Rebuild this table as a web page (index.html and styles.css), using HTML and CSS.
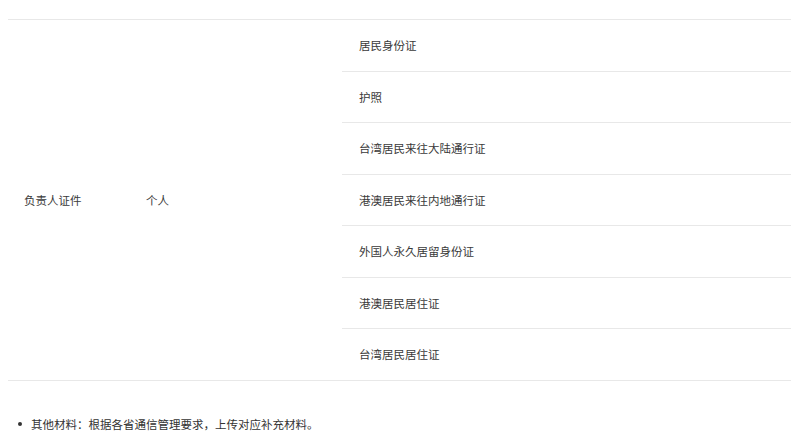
FILE: index.html
```html
<!DOCTYPE html>
<html lang="zh-CN">
<head>
<meta charset="utf-8">
<link rel="stylesheet" href="styles.css">
</head>
<body>
<div class="table">
  <div class="cell cell-name">负责人证件</div>
  <div class="cell cell-type">个人</div>
  <div class="docs">
    <div class="doc">居民身份证</div>
    <div class="doc">护照</div>
    <div class="doc">台湾居民来往大陆通行证</div>
    <div class="doc">港澳居民来往内地通行证</div>
    <div class="doc">外国人永久居留身份证</div>
    <div class="doc">港澳居民居住证</div>
    <div class="doc">台湾居民居住证</div>
  </div>
</div>
<ul class="notes">
  <li class="note">其他材料：根据各省通信管理要求，上传对应补充材料。</li>
</ul>
</body>
</html>
```
FILE: styles.css
```css
html, body {
  background: #fff;
}
body {
  margin: 8px;
  font-family: "Noto Sans CJK SC", "Noto Sans", sans-serif;
  font-size: 11.5px;
  color: #333;
}
.table {
  margin-top: 11px;
  display: grid;
  grid-template-columns: 122px 212px 1fr;
  border-top: 1px solid #e8e8e8;
  border-bottom: 1px solid #e8e8e8;
  color: #3a3a3a;
}
.cell {
  display: flex;
  align-items: center;
  padding: 0 16px;
  line-height: 18.6px;
}
.docs {
  display: flex;
  flex-direction: column;
}
.doc {
  padding: 16px 17px;
  line-height: 18.57px;
}
.doc + .doc {
  border-top: 1px solid #e8e8e8;
}
.notes {
  list-style: none;
  margin: 34px 0 0;
  padding: 0;
}
.note {
  position: relative;
  padding-left: 23px;
  line-height: 18.6px;
}
.note::before {
  content: "";
  position: absolute;
  left: 10px;
  top: 7px;
  width: 4px;
  height: 4px;
  border-radius: 50%;
  background: #333;
}
```
